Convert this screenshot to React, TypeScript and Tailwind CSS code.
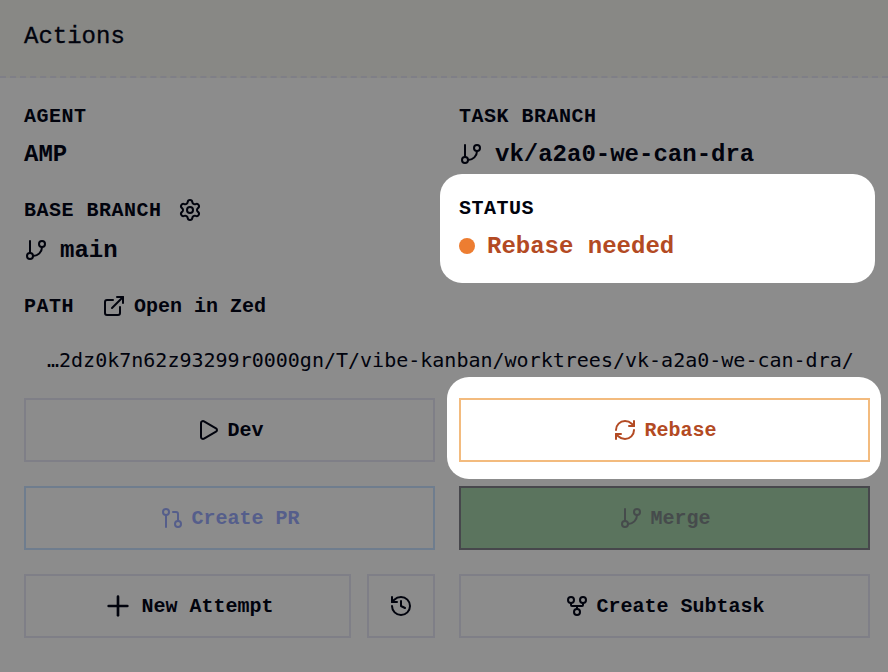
import type { ReactNode } from 'react';
import {
  ExternalLink,
  GitBranch,
  GitFork,
  GitPullRequest,
  History,
  Play,
  Plus,
  RefreshCw,
  Settings,
} from 'lucide-react';

function Label({ children }: { children: ReactNode }) {
  return (
    <span className="translate-y-px text-[20px] leading-7 tracking-[0.5px] font-bold uppercase whitespace-pre">
      {children}
    </span>
  );
}

function Button({
  icon,
  children,
  className,
}: {
  icon: ReactNode;
  children?: ReactNode;
  className: string;
}) {
  return (
    <button
      className={`flex h-16 items-center justify-center border-2 text-[20px] leading-7 font-bold ${className}`}
    >
      {children ? <span className="mr-[7px] ml-px">{icon}</span> : icon}
      {children && <span className="translate-y-px">{children}</span>}
    </button>
  );
}

export default function App() {
  return (
    <div className="h-[672px] w-[888px] overflow-hidden bg-[#8c8c8c] font-['Liberation_Mono',monospace] text-[#01030d]">
      <header className="flex h-[78px] items-start border-b-2 border-dashed border-[#7f7f87] bg-[#888885] px-6 pt-[21px]">
        <h1 className="text-[24px] leading-8 font-normal [-webkit-text-stroke:0.3px_currentColor]">
          Actions
        </h1>
      </header>

      <main className="pt-6 pr-[18px] pl-6">
        <section className="grid grid-cols-2 gap-x-6">
          <div className="flex h-[94px] flex-col">
            <Label>Agent</Label>
            <span className="mt-[9px] text-[24px] leading-8 font-bold">AMP</span>
          </div>
          <div className="flex h-[94px] flex-col">
            <Label>Task Branch</Label>
            <span className="mt-2 flex items-center gap-3 text-[24px] leading-8 font-bold">
              <GitBranch size={24} />
              <span className="translate-y-px">vk/a2a0-we-can-dra</span>
            </span>
          </div>
          <div className="flex h-24 flex-col">
            <span className="flex items-center gap-4">
              <Label>Base Branch</Label>
              <Settings size={24} />
            </span>
            <span className="mt-2.5 flex items-center gap-3 text-[24px] leading-8 font-bold">
              <GitBranch size={24} />
              <span className="translate-y-px">main</span>
            </span>
          </div>
          <div className="relative h-24">
            <div className="absolute -top-[22px] -left-[19px] h-[108.5px] w-[435px] rounded-[22px] bg-white" />
            <div className="relative -top-0.5 flex flex-col">
              <Label>Status</Label>
              <span className="mt-2 flex items-center gap-3 text-[24px] leading-8 font-bold text-[#b34a23]">
                <span className="size-4 rounded-full bg-[#ed7d31]" />
                <span className="translate-y-px">Rebase needed</span>
              </span>
            </div>
          </div>
        </section>

        <div className="flex h-7 items-center">
          <Label>Path</Label>
          <ExternalLink size={24} className="ml-7" />
          <span className="ml-2 translate-y-px text-[20px] leading-7 font-bold">Open in Zed</span>
        </div>

        <div className="mt-[26px] h-7 pl-[23px] font-['DejaVu_Sans_Mono',monospace] text-[20px] leading-7 whitespace-nowrap">
          …2dz0k7n62z93299r0000gn/T/vibe-kanban/worktrees/vk-a2a0-we-can-dra/
        </div>

        <section className="mt-6 grid grid-cols-2 gap-6">
          <Button className="border-[#7f7f87]" icon={<Play size={24} />}>
            Dev
          </Button>
          <div className="relative grid">
            <div className="absolute -top-[21.5px] -left-[12.5px] h-[102.5px] w-[434px] rounded-[22px] bg-white" />
            <Button
              className="relative border-[#f3bb7e] text-[#b34a23]"
              icon={<RefreshCw size={24} />}
            >
              Rebase
            </Button>
          </div>
          <Button className="border-[#6f7d8e] text-[#555e8b]" icon={<GitPullRequest size={24} />}>
            Create PR
          </Button>
          <Button
            className="border-[#47474c] bg-[#5b745e] text-[#464b4c]"
            icon={<GitBranch size={24} />}
          >
            Merge
          </Button>
          <div className="flex gap-4">
            <Button className="flex-1 border-[#7f7f87]" icon={<Plus size={32} />}>
              New Attempt
            </Button>
            <Button className="w-[68px] border-[#7f7f87]" icon={<History size={24} />} />
          </div>
          <Button className="border-[#7f7f87]" icon={<GitFork size={24} />}>
            Create Subtask
          </Button>
        </section>
      </main>
    </div>
  );
}
